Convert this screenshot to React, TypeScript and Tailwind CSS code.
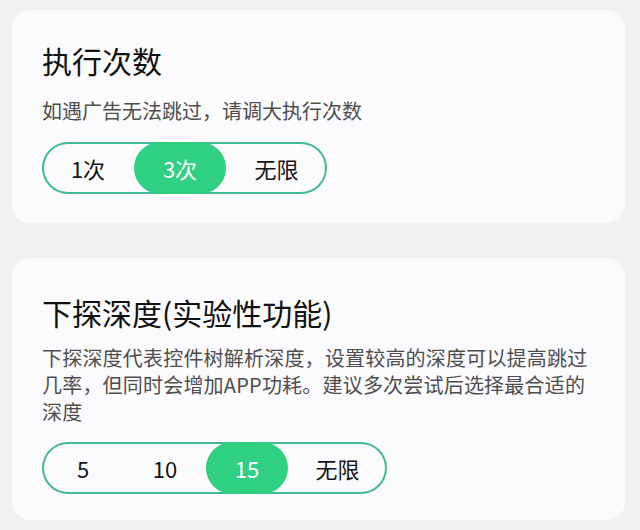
import React from "react";

const font = { fontFamily: '"Noto Sans CJK SC", "Noto Sans", sans-serif' };

function Segmented({
  items,
  selected,
  segW,
  width,
}: {
  items: string[];
  selected: number;
  segW: string;
  width: string;
}) {
  return (
    <div
      className={`flex h-[52px] rounded-full shadow-[inset_0_0_0_2px_#3fba95] ${width}`}
    >
      {items.map((it, i) => {
        const last = i === items.length - 1;
        const sel = i === selected;
        return (
          <div
            key={it}
            className={`flex h-full items-center justify-center rounded-full text-[22px] ${
              last ? "flex-1" : segW
            } ${sel ? "bg-[#2fd081] text-white" : "text-[#141414]"}`}
          >
            {it}
          </div>
        );
      })}
    </div>
  );
}

export default function App() {
  return (
    <div
      style={font}
      className="flex h-[530px] w-[640px] flex-col gap-[35px] overflow-hidden bg-[#f1f1f4] pl-[12px] pr-[15px] pt-[10px]"
    >
      <div className="h-[213px] rounded-[18px] bg-[#fbfbfd] pl-[30px] pt-[30px]">
        <div className="h-[40px] text-[30px] font-normal leading-[40px] text-[#111111]">
          执行次数
        </div>
        <div className="mt-[17px] text-[20px] leading-[27px] text-[#4e4e4e]">
          如遇广告无法跳过，请调大执行次数
        </div>
        <div className="mt-[18px]">
          <Segmented
            items={["1次", "3次", "无限"]}
            selected={1}
            segW="w-[92px]"
            width="w-[285px]"
          />
        </div>
      </div>
      <div className="h-[262px] rounded-[18px] bg-[#fbfbfd] pl-[30px] pt-[34px]">
        <div className="h-[40px] text-[30px] font-normal leading-[40px] text-[#111111]">
          下探深度(实验性功能)
        </div>
        <div className="mt-[12px] w-[556px] text-[20px] tracking-[0.2px] leading-[27px] text-[#4e4e4e]">
          下探深度代表控件树解析深度，设置较高的深度可以提高跳过几率，但同时会增加APP功耗。建议多次尝试后选择最合适的深度
        </div>
        <div className="mt-[17px]">
          <Segmented
            items={["5", "10", "15", "无限"]}
            selected={2}
            segW="w-[82px]"
            width="w-[345px]"
          />
        </div>
      </div>
    </div>
  );
}
